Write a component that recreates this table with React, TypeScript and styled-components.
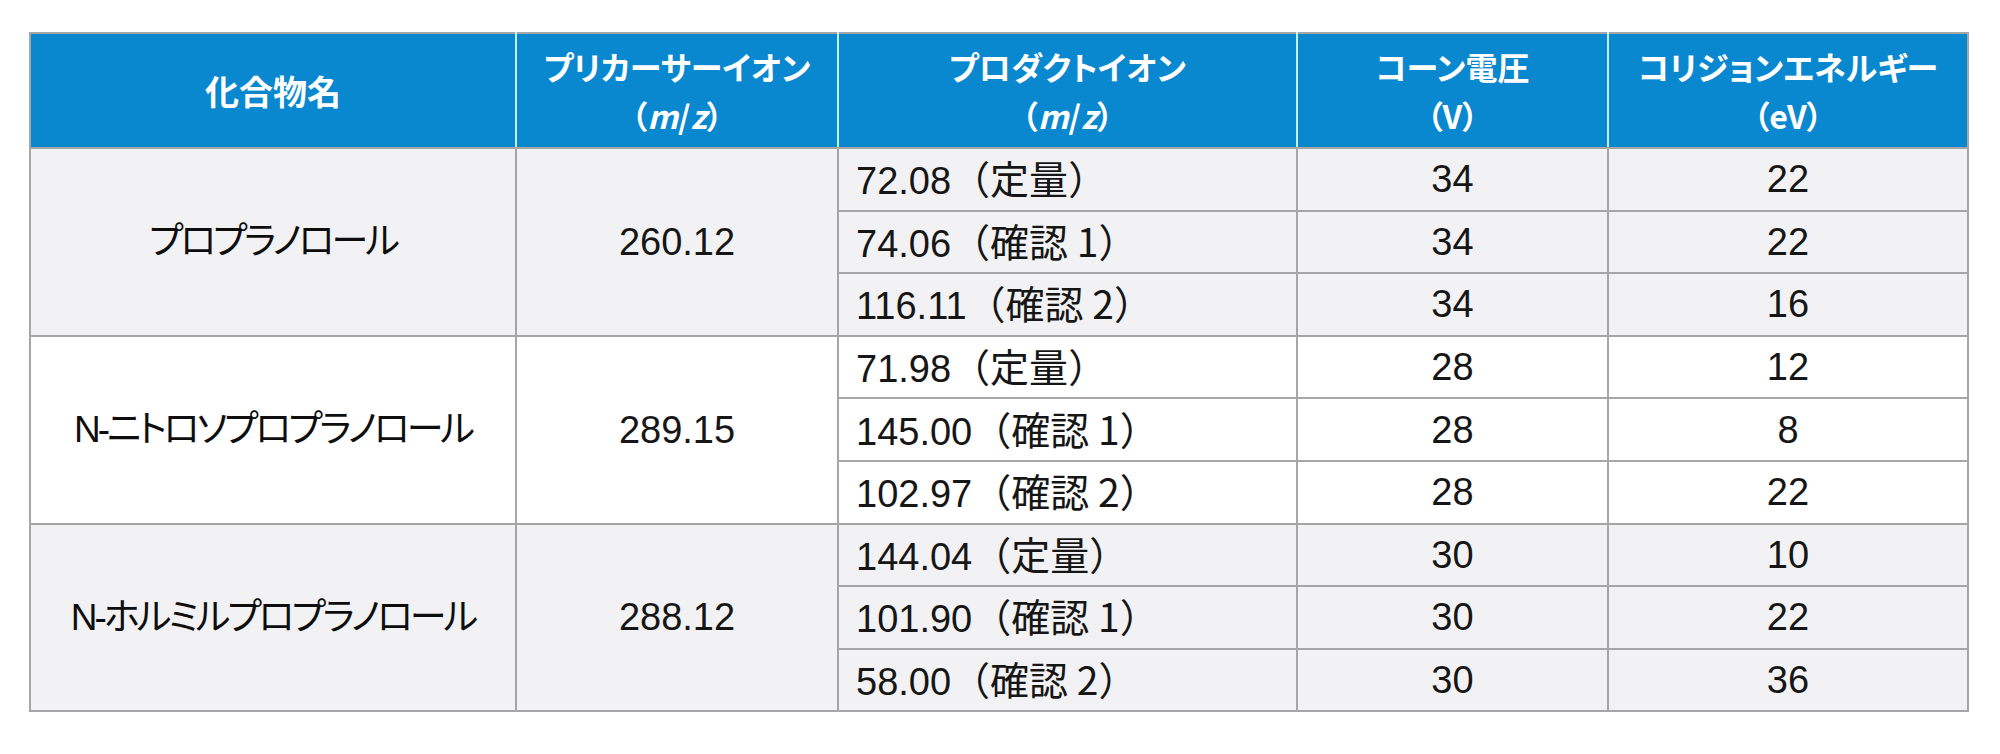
import React from "react";
import styled, { createGlobalStyle } from "styled-components";

type Shade = "gray" | "white";

interface Transition {
  product: string;
  tag: string;
  cone: number;
  energy: number;
}

interface Compound {
  name: string;
  precursor: string;
  shade: Shade;
  transitions: Transition[];
}

const compounds: Compound[] = [
  {
    name: "プロプラノロール",
    precursor: "260.12",
    shade: "gray",
    transitions: [
      { product: "72.08", tag: "定量", cone: 34, energy: 22 },
      { product: "74.06", tag: "確認 1", cone: 34, energy: 22 },
      { product: "116.11", tag: "確認 2", cone: 34, energy: 16 },
    ],
  },
  {
    name: "N-ニトロソプロプラノロール",
    precursor: "289.15",
    shade: "white",
    transitions: [
      { product: "71.98", tag: "定量", cone: 28, energy: 12 },
      { product: "145.00", tag: "確認 1", cone: 28, energy: 8 },
      { product: "102.97", tag: "確認 2", cone: 28, energy: 22 },
    ],
  },
  {
    name: "N-ホルミルプロプラノロール",
    precursor: "288.12",
    shade: "gray",
    transitions: [
      { product: "144.04", tag: "定量", cone: 30, energy: 10 },
      { product: "101.90", tag: "確認 1", cone: 30, energy: 22 },
      { product: "58.00", tag: "確認 2", cone: 30, energy: 36 },
    ],
  },
];

const GlobalStyle = createGlobalStyle`
  html, body {
    margin: 0;
    background: #ffffff;
  }
  body {
    font-family: "Liberation Sans", "Noto Sans CJK JP", sans-serif;
    color: #161616;
  }
`;

const Page = styled.div`
  padding: 32px 0 0 29px;
`;

const Table = styled.table`
  border-collapse: collapse;
  table-layout: fixed;
  width: 1938px;
  border: 2px solid #a6a6a6;
`;

const HeadCell = styled.th`
  height: 113px;
  padding: 0;
  background: #0a88cf;
  color: #ffffff;
  font-family: "Noto Sans CJK JP", sans-serif;
  font-feature-settings: "palt";
  font-weight: 700;
  font-size: 32px;
  line-height: 49px;
  text-align: center;
  vertical-align: middle;
  border-top: 2px solid #a6a6a6;
  border-bottom: 2px solid #a6a6a6;
  border-left: 2px solid #c8eefb;
  border-right: 2px solid #c8eefb;

  &:first-child {
    border-left: 2px solid #a6a6a6;
    font-size: 34px;
  }
  &:last-child {
    border-right: 2px solid #a6a6a6;
  }

  em {
    font-style: italic;
  }
`;

const Cell = styled.td<{ $shade: Shade; $align?: "left" | "center" }>`
  height: 60.6px;
  padding: ${(p) => (p.$align === "left" ? "0 0 0 17px" : "0")};
  background: ${(p) => (p.$shade === "gray" ? "#f2f2f4" : "#ffffff")};
  border: 2px solid #a6a6a6;
  font-size: 38px;
  line-height: 1;
  text-align: ${(p) => p.$align ?? "center"};
  vertical-align: middle;
  white-space: nowrap;
`;

const NameCell = styled(Cell)`
  font-size: 37px;
  font-feature-settings: "palt";
  letter-spacing: -3px;
  color: #0e0e0e;
`;

const Tag = styled.span`
  font-family: "Noto Sans CJK JP", sans-serif;
  font-size: 39px;
`;

const widths = [486, 322, 459, 311, 360];

export default function App() {
  return (
    <>
      <GlobalStyle />
      <Page>
        <Table>
          <colgroup>
            {widths.map((w) => (
              <col key={w} style={{ width: w }} />
            ))}
          </colgroup>
          <thead>
            <tr>
              <HeadCell>化合物名</HeadCell>
              <HeadCell>
                プリカーサーイオン
                <br />（<em>m</em>/<em>z</em>）
              </HeadCell>
              <HeadCell>
                プロダクトイオン
                <br />（<em>m</em>/<em>z</em>）
              </HeadCell>
              <HeadCell>
                コーン電圧
                <br />（V）
              </HeadCell>
              <HeadCell>
                コリジョンエネルギー
                <br />（eV）
              </HeadCell>
            </tr>
          </thead>
          <tbody>
            {compounds.map((c) =>
              c.transitions.map((t, i) => (
                <tr key={c.name + t.product}>
                  {i === 0 && (
                    <>
                      <NameCell $shade={c.shade} rowSpan={c.transitions.length}>
                        {c.name}
                      </NameCell>
                      <Cell $shade={c.shade} rowSpan={c.transitions.length}>
                        {c.precursor}
                      </Cell>
                    </>
                  )}
                  <Cell $shade={c.shade} $align="left">
                    {t.product}
                    <Tag>（{t.tag}）</Tag>
                  </Cell>
                  <Cell $shade={c.shade}>{t.cone}</Cell>
                  <Cell $shade={c.shade}>{t.energy}</Cell>
                </tr>
              ))
            )}
          </tbody>
        </Table>
      </Page>
    </>
  );
}
